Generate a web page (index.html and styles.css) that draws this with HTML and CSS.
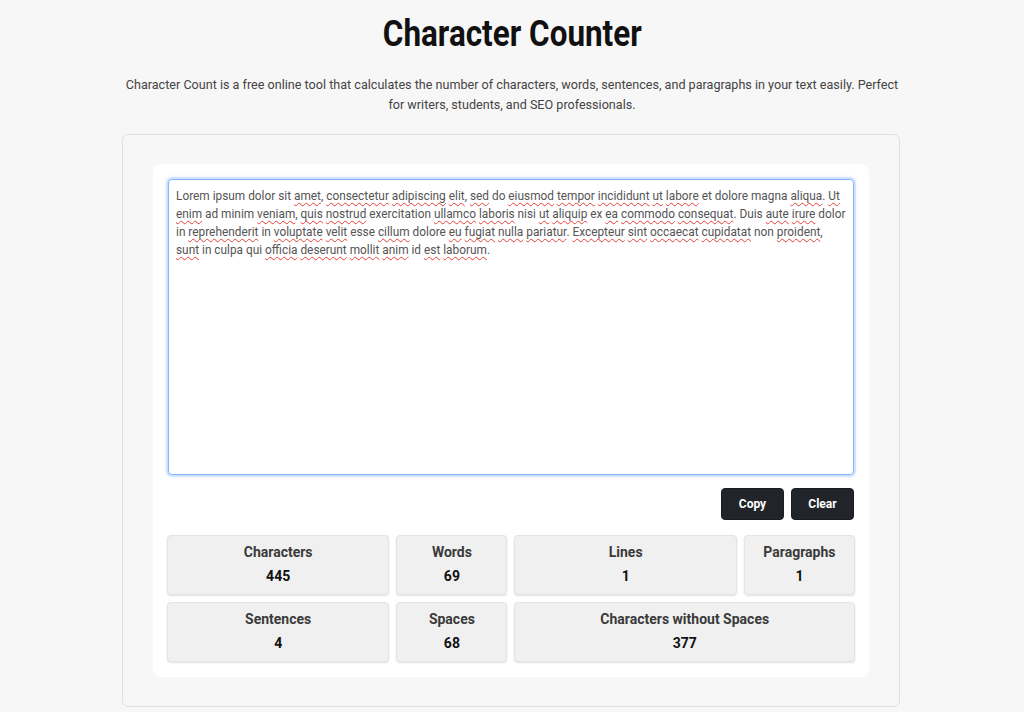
FILE: index.html
```html
<!DOCTYPE html>
<html lang="en">
<head>
<meta charset="utf-8">
<title>Character Counter</title>
<link rel="stylesheet" href="styles.css">
</head>
<body>
<header class="intro">
  <h1 class="title"><span class="title-text">Character Counter</span></h1>
  <p class="lead">Character Count is a free online tool that calculates the number of characters, words, sentences, and paragraphs in your text easily. Perfect for writers, students, and SEO professionals.</p>
</header>
<main class="shell">
  <section class="panel">
    <div class="editor" role="textbox" aria-multiline="true">Lorem ipsum dolor sit <span class="sp">amet</span>, <span class="sp">consectetur</span> <span class="sp">adipiscing</span> <span class="sp">elit</span>, <span class="sp">sed</span> do <span class="sp">eiusmod</span> <span class="sp">tempor</span> <span class="sp">incididunt</span> <span class="sp">ut</span> <span class="sp">labore</span> et dolore magna <span class="sp">aliqua</span>. <span class="sp">Ut</span> <span class="sp">enim</span> ad minim <span class="sp">veniam</span>, <span class="sp">quis</span> <span class="sp">nostrud</span> exercitation <span class="sp">ullamco</span> <span class="sp">laboris</span> nisi <span class="sp">ut</span> <span class="sp">aliquip</span> ex <span class="sp">ea</span> <span class="sp">commodo</span> <span class="sp">consequat</span>. Duis <span class="sp">aute</span> <span class="sp">irure</span> dolor in <span class="sp">reprehenderit</span> in <span class="sp">voluptate</span> <span class="sp">velit</span> esse <span class="sp">cillum</span> dolore <span class="sp">eu</span> <span class="sp">fugiat</span> <span class="sp">nulla</span> <span class="sp">pariatur</span>. <span class="sp">Excepteur</span> <span class="sp">sint</span> <span class="sp">occaecat</span> <span class="sp">cupidatat</span> non <span class="sp">proident</span>, <span class="sp">sunt</span> in culpa qui <span class="sp">officia</span> <span class="sp">deserunt</span> <span class="sp">mollit</span> <span class="sp">anim</span> id <span class="sp">est</span> <span class="sp">laborum</span>.</div>
    <div class="actions">
      <button class="btn">Copy</button>
      <button class="btn">Clear</button>
    </div>
    <div class="stats">
      <div class="stat"><div class="stat-label">Characters</div><div class="stat-value">445</div></div>
      <div class="stat"><div class="stat-label">Words</div><div class="stat-value">69</div></div>
      <div class="stat"><div class="stat-label">Lines</div><div class="stat-value">1</div></div>
      <div class="stat"><div class="stat-label">Paragraphs</div><div class="stat-value">1</div></div>
      <div class="stat"><div class="stat-label">Sentences</div><div class="stat-value">4</div></div>
      <div class="stat"><div class="stat-label">Spaces</div><div class="stat-value">68</div></div>
      <div class="stat stat-wide"><div class="stat-label">Characters without Spaces</div><div class="stat-value">377</div></div>
    </div>
  </section>
</main>
</body>
</html>
```
FILE: styles.css
```css
* { box-sizing: border-box; }
html, body { margin: 0; padding: 0; }
body {
  background: #f7f7f7;
  font-family: Roboto, "Liberation Sans", sans-serif;
  color: #333;
}
.intro {
  text-align: center;
  padding-top: 13px;
}
.title {
  margin: 0;
  font-family: Roboto, "Liberation Sans", sans-serif;
  font-weight: bold;
  font-size: 37px;
  line-height: 42px;
  color: #111;
}
.title-text {
  display: inline-block;
  transform: scaleX(0.85);
}
.lead {
  margin: 20px auto 0;
  width: 780px;
  font-size: 12.6px;
  line-height: 20px;
  color: #444;
}
.shell {
  width: 778px;
  margin: 19px 0 0 calc(50% - 390px);
  border: 1px solid #e1e1e1;
  border-radius: 6px;
  background: #f7f7f7;
  padding: 29px 30px 29px 30px;
}
.panel {
  background: #fff;
  border-radius: 8px;
  padding: 15px 15px 15px 15px;
}
.editor {
  width: 686px;
  height: 296px;
  border: 1px solid #86b7fe;
  border-radius: 4px;
  box-shadow: 0 0 0 2px rgba(13, 110, 253, 0.12), 0 0 5px rgba(13, 110, 253, 0.25);
  padding: 7px 5px 7px 7px;
  font-family: Roboto, "Liberation Sans", sans-serif;
  font-size: 11.85px;
  line-height: 18px;
  color: #555;
  background: #fff;
  overflow: hidden;
}
.sp {
  text-decoration: underline wavy #e5403a;
  text-decoration-thickness: 1px;
  text-underline-offset: 2px;
  text-decoration-skip-ink: none;
}
.actions {
  display: flex;
  justify-content: flex-end;
  gap: 7px;
  margin-top: 13px;
}
.btn {
  height: 32px;
  min-width: 63px;
  padding: 0 15px;
  border: 1px solid #1b1e21;
  border-radius: 4px;
  background: #212529;
  color: #fff;
  font-family: Roboto, "Liberation Sans", sans-serif;
  font-weight: bold;
  font-size: 12px;
}
.stats {
  display: grid;
  grid-template-columns: 2fr 1fr 2fr 1fr;
  gap: 7px;
  margin: 15px 0 0 -1px;
  width: 688px;
}
.stat {
  height: 60px;
  background: #f0f0f0;
  border: 1px solid #e4e4e4;
  border-radius: 4px;
  box-shadow: 0 1px 2px rgba(0, 0, 0, 0.12);
  text-align: center;
  padding-top: 6px;
}
.stat-wide { grid-column: 3 / 5; }
.stat-label {
  font-weight: bold;
  font-size: 14px;
  line-height: 20px;
  color: #3a3a3a;
}
.stat-value {
  margin-top: 4px;
  font-weight: bold;
  font-size: 14px;
  line-height: 20px;
  color: #111;
}
```
